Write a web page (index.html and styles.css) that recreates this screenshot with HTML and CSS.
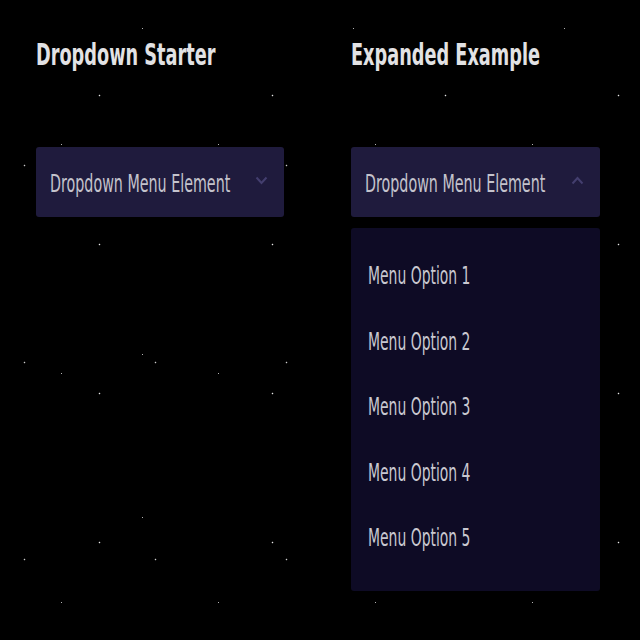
FILE: index.html
```html
<!DOCTYPE html>
<html>
<head>
<meta charset="utf-8">
<link rel="stylesheet" href="styles.css">
</head>
<body>
<div class="page">
  <section class="col">
    <h2 class="title"><span class="narrow">Dropdown Starter</span></h2>
    <div class="select">
      <span class="label narrow">Dropdown Menu Element</span>
      <svg class="chev" width="13" height="9" viewBox="0 0 13 9"><path d="M1.5 1.5 L6.5 7 L11.5 1.5" fill="none" stroke="#433e6e" stroke-width="2"/></svg>
    </div>
  </section>
  <section class="col">
    <h2 class="title"><span class="narrow">Expanded Example</span></h2>
    <div class="select">
      <span class="label narrow">Dropdown Menu Element</span>
      <svg class="chev" width="13" height="9" viewBox="0 0 13 9"><path d="M1.5 7.5 L6.5 2 L11.5 7.5" fill="none" stroke="#433e6e" stroke-width="2"/></svg>
    </div>
    <ul class="menu">
      <li><span class="narrow">Menu Option 1</span></li>
      <li><span class="narrow">Menu Option 2</span></li>
      <li><span class="narrow">Menu Option 3</span></li>
      <li><span class="narrow">Menu Option 4</span></li>
      <li><span class="narrow">Menu Option 5</span></li>
    </ul>
  </section>
</div>
</body>
</html>
```
FILE: styles.css
```css
html, body {
  margin: 0;
  padding: 0;
}
body {
  width: 640px;
  height: 640px;
  background-color: #000;
  background-image:
    radial-gradient(circle, rgba(255,255,255,0.9) 0.6px, transparent 1.1px),
    radial-gradient(circle, rgba(255,255,255,0.8) 0.6px, transparent 1.1px),
    radial-gradient(circle, rgba(255,255,255,0.7) 0.6px, transparent 1px),
    radial-gradient(circle, rgba(255,255,255,0.7) 0.6px, transparent 1px);
  background-size: 173px 149px, 131px 197px, 211px 163px, 157px 229px;
  background-position: 13px 21px, 90px 67px, 37px 110px, 140px 30px;
  font-family: "DejaVu Sans", sans-serif;
  font-stretch: condensed;
  overflow: hidden;
}
.page {
  display: grid;
  grid-template-columns: 248px 249px;
  column-gap: 67px;
  padding: 34px 0 0 36px;
}
.col {
  display: flex;
  flex-direction: column;
}
.narrow {
  display: inline-block;
  white-space: nowrap;
  transform-origin: left center;
}
.title {
  margin: 0;
  font-size: 31px;
  line-height: 40px;
  height: 40px;
  font-weight: bold;
  color: #e2e2e4;
  white-space: nowrap;
}
.title .narrow {
  transform: scaleX(0.635);
}
.select {
  margin-top: 73px;
  height: 70px;
  box-sizing: border-box;
  background: #1f1b3d;
  border-radius: 3px;
  display: flex;
  align-items: center;
  justify-content: space-between;
  padding: 0 16px 0 14px;
  overflow: hidden;
}
.label {
  font-size: 25px;
  color: #c4c3cc;
  transform: scaleX(0.635);
  width: 180px;
  margin-top: 2px;
}
.chev {
  display: block;
  flex: none;
  margin-top: -4px;
}
.menu {
  list-style: none;
  margin: 11px 0 0 0;
  padding: 33px 0 0 17px;
  height: 363px;
  box-sizing: border-box;
  background: #0e0b25;
  border-radius: 3px;
}
.menu li {
  font-size: 24px;
  line-height: 30px;
  height: 65.5px;
  color: #c9c8d0;
}
.menu li .narrow {
  transform: scaleX(0.645);
}
```
